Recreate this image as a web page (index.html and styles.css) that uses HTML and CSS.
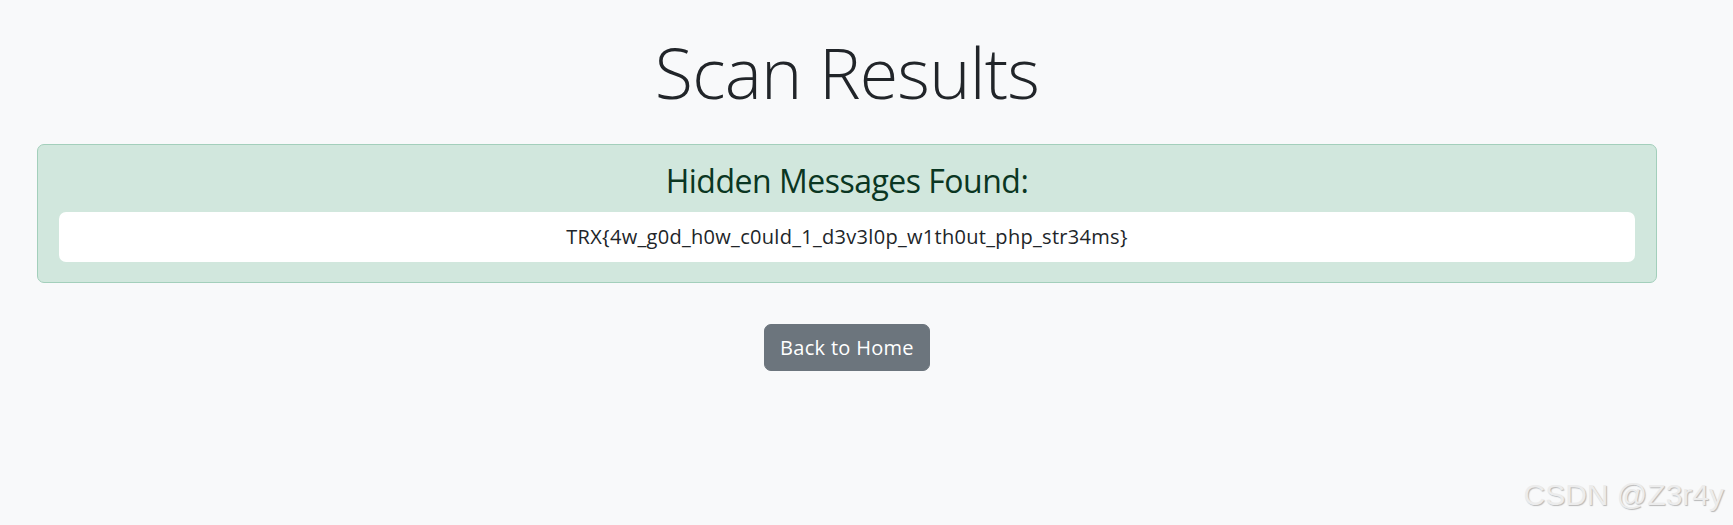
FILE: index.html
```html
<!DOCTYPE html>
<html lang="en">
<head>
<meta charset="utf-8">
<title>Scan Results</title>
<link rel="stylesheet" href="styles.css">
</head>
<body>
<main class="container">
  <h1 class="title">Scan Results</h1>
  <section class="alert">
    <h3 class="alert-heading">Hidden Messages Found:</h3>
    <div class="message">TRX{4w_g0d_h0w_c0uld_1_d3v3l0p_w1th0ut_php_str34ms}</div>
  </section>
  <div class="actions">
    <a class="btn" href="#">Back to Home</a>
  </div>
</main>
<div class="watermark">CSDN @Z3r4y</div>
</body>
</html>
```

FILE: styles.css
```css
html, body {
  margin: 0;
  padding: 0;
}
body {
  background: #f8f9fa;
  color: #212529;
  font-family: "Open Sans", "Noto Sans", sans-serif;
  height: 525px;
  overflow: hidden;
  position: relative;
}
.container {
  width: 1620px;
  margin-left: 37px;
  padding-top: 30px;
}
.title {
  margin: 0 0 29px 0;
  font-size: 70px;
  font-weight: 300;
  line-height: 85px;
  letter-spacing: -0.8px;
  text-align: center;
  color: #212529;
}
.alert {
  background: #d1e7dd;
  border: 1px solid #a3cfbb;
  border-radius: 7px;
  padding: 15px 21px 20px 21px;
}
.alert-heading {
  margin: 0 0 10px 0;
  font-size: 32px;
  font-weight: 400;
  line-height: 42px;
  letter-spacing: -0.5px;
  text-align: center;
  color: #0a3622;
}
.message {
  background: #fff;
  border-radius: 7px;
  padding: 10px;
  font-size: 20px;
  line-height: 30px;
  letter-spacing: 0.3px;
  text-align: center;
  color: #212529;
}
.actions {
  display: flex;
  justify-content: center;
  margin-top: 41px;
}
.btn {
  display: inline-block;
  background: #6c757d;
  border: 1px solid #6c757d;
  border-radius: 7px;
  color: #fff;
  text-decoration: none;
  font-size: 20px;
  line-height: 30px;
  letter-spacing: 0.3px;
  padding: 7.5px 15px;
}
.watermark {
  position: absolute;
  right: 9px;
  bottom: 13px;
  font-family: "Liberation Sans", Arial, sans-serif;
  font-size: 30px;
  line-height: 34px;
  color: #ececec;
  text-shadow: 1px 1px 1px #b8b8b8;
}
```
